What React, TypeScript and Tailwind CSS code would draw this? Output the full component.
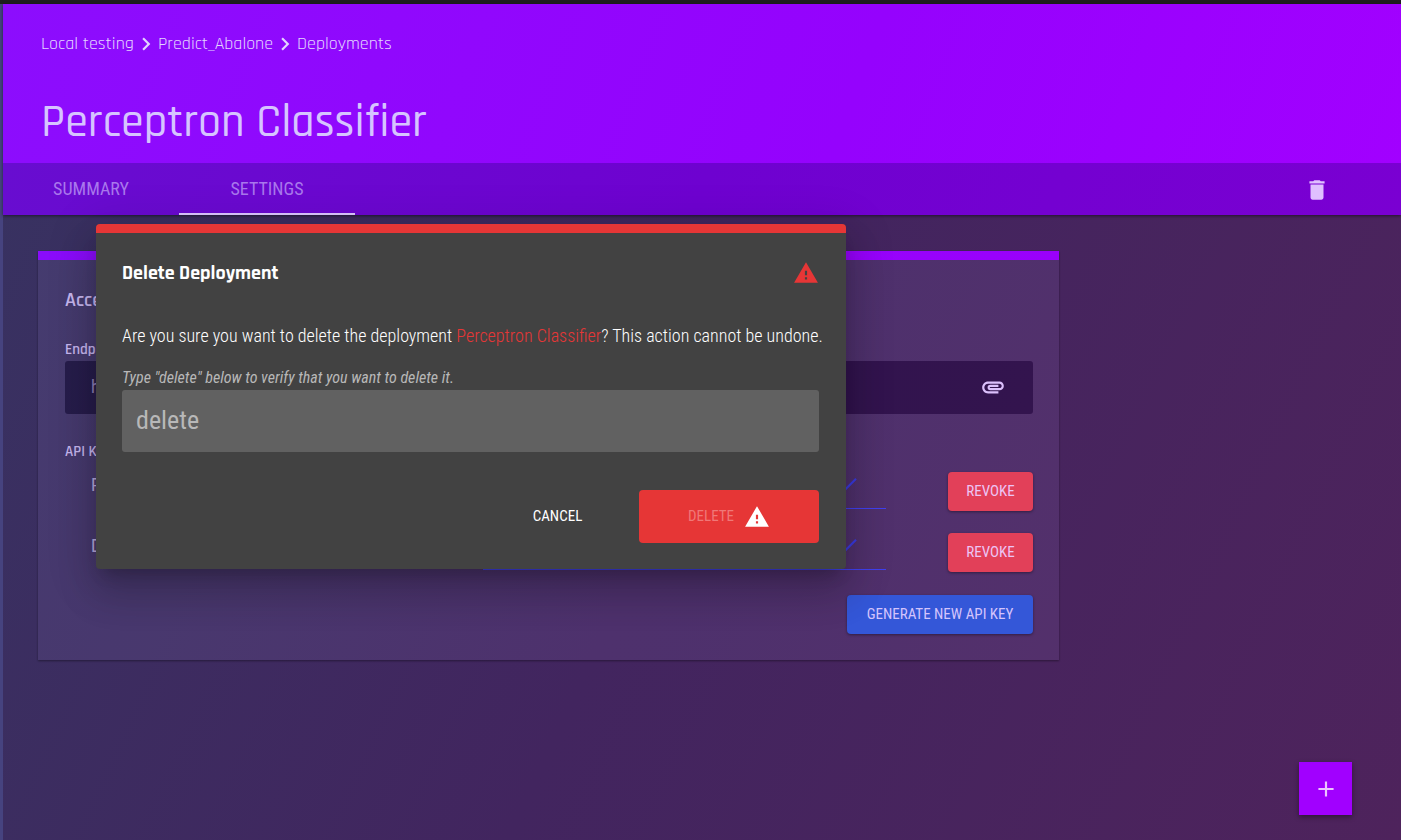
import React from "react";
import { MdChevronRight, MdDelete, MdWarning, MdAttachment, MdAdd, MdDone } from "react-icons/md";

const crumbs = ["Local testing", "Predict_Abalone", "Deployments"];
const apiKeys = ["Primary", "Default"];

function Header() {
  return (
    <header className="bg-linear-[110deg] from-[#8c0dfd] via-[#9502fd] via-60% to-[#a200ff] shadow-[0_1px_3px_rgba(0,0,0,0.5)]">
      <nav
        aria-label="Breadcrumb"
        className="flex h-20 items-center px-[38px] font-['Rajdhani','Roboto',sans-serif] text-lg text-[#e2d4ff]"
      >
        {crumbs.map((crumb, i) => (
          <React.Fragment key={crumb}>
            {i > 0 && <MdChevronRight className="-mx-px size-[26px]" aria-hidden />}
            <a href="#">{crumb}</a>
          </React.Fragment>
        ))}
      </nav>
      <h1 className="h-[79px] px-[38px] pt-[13px] font-['Rajdhani','Roboto',sans-serif] text-[46px] leading-[52px] font-medium text-[#d6c4ff]">
        Perceptron Classifier
      </h1>
      <div className="flex h-[52px] items-stretch justify-between bg-linear-[110deg] from-[#680dd0] via-[#6e02d0] to-[#7a00d2] pr-[71px] font-['Roboto_Condensed',sans-serif] text-lg">
        <div role="tablist" className="flex">
          <button role="tab" aria-selected="false" className="w-44 text-[#a978ec]">SUMMARY</button>
          <button role="tab" aria-selected="true" className="w-44 border-b-2 border-[#dcc6ff] pt-0.5 text-[#a978ec]">
            SETTINGS
          </button>
        </div>
        <button aria-label="Delete deployment" className="pt-0.5 text-[#e0c0ff]">
          <MdDelete className="size-[26px]" />
        </button>
      </div>
    </header>
  );
}

function AccessCard() {
  return (
    <section className="mt-9 ml-[35px] max-w-[1021px] bg-[#c8b4ff]/9 shadow-[0_1px_2px_rgba(0,0,0,0.4)]">
      <div className="h-[9px] bg-linear-to-r from-[#8a0cfb] to-[#9a00fc]" />
      <div className="py-[26px] pr-[26px] pl-[27px] text-[#c8b8f0]">
        <h2 className="font-['Rajdhani','Roboto',sans-serif] text-xl leading-7 font-semibold">Access</h2>
        <label
          htmlFor="endpoint"
          className="mt-6 block font-['Rajdhani','Roboto',sans-serif] text-[15px] leading-[23px] font-semibold"
        >
          Endpoint
        </label>
        <div className="flex h-[53px] items-center rounded-[3px] bg-linear-[110deg] from-[#261d4b] via-[#30134e] to-[#33144e] pr-[27px] pl-[26px]">
          <input
            id="endpoint"
            readOnly
            defaultValue="https://localhost"
            className="min-w-0 flex-1 bg-transparent pb-0.5 font-['Roboto_Condensed',sans-serif] text-lg text-[#8f80b8] outline-none"
          />
          <button aria-label="Copy endpoint" className="pb-0.5 text-[#dcc0fc]">
            <MdAttachment className="size-[26px]" />
          </button>
        </div>
        <h3 className="mt-[26px] font-['Rajdhani','Roboto',sans-serif] text-[15px] leading-[23px] font-semibold">API Keys</h3>
        <ul className="mt-[9px] flex flex-col gap-[22px]">
          {apiKeys.map((name) => (
            <li key={name} className="flex h-[39px] items-start">
              <span className="w-[418px] pl-[26px] font-['Roboto_Condensed',sans-serif] text-lg leading-[26px] text-[#b8a8dc]">
                {name}
              </span>
              <span className="flex h-[37px] w-[403px] items-start justify-end border-b border-[#4040f0] pr-[26px]">
                <MdDone className="size-[26px] text-[#3a3ae0]" aria-hidden />
              </span>
              <button className="ml-auto h-[39px] w-[85px] rounded bg-[#e24059] font-['Roboto_Condensed',sans-serif] text-[15px] text-[#edc4f4] shadow-[0_1px_3px_rgba(0,0,0,0.4)]">
                REVOKE
              </button>
            </li>
          ))}
        </ul>
        <div className="mt-[23px] flex justify-end">
          <button className="h-[39px] min-w-[186px] rounded bg-[#3457d8] px-4 font-['Roboto_Condensed',sans-serif] text-[15px] text-[#d4c4fc] shadow-[0_1px_3px_rgba(0,0,0,0.4)]">
            GENERATE NEW API KEY
          </button>
        </div>
      </div>
    </section>
  );
}

function DeleteDialog() {
  return (
    <div
      role="dialog"
      aria-labelledby="dialog-title"
      className="absolute top-[220px] left-24 w-[750px] overflow-hidden rounded bg-[#424242] pr-[27px] pb-[26px] pl-[26px] font-['Roboto_Condensed',sans-serif] text-white shadow-[0_11px_15px_-7px_rgba(0,0,0,0.2),0_24px_38px_3px_rgba(0,0,0,0.14),0_9px_46px_8px_rgba(0,0,0,0.12)]"
    >
      <div className="-mr-[27px] -ml-[26px] h-[9px] bg-[#e63636]" />
      <div className="mt-[26px] flex h-7 items-center justify-between">
        <h2 id="dialog-title" className="font-['Rajdhani','Roboto',sans-serif] text-xl font-bold">Delete Deployment</h2>
        <MdWarning className="size-[26px] text-[#e63636]" aria-hidden />
      </div>
      <p className="mt-[35px] text-lg leading-7 font-light whitespace-nowrap">
        Are you sure you want to delete the deployment <span className="text-[#e63636]">Perceptron Classifier</span>? This action
        cannot be undone.
      </p>
      <label htmlFor="confirm" className="mt-4 block text-base leading-6 text-[#b8b8b8] italic">
        Type "delete" below to verify that you want to delete it.
      </label>
      <input
        id="confirm"
        type="text"
        placeholder="delete"
        className="block h-[62px] w-full rounded-[3px] bg-[#616161] px-[14px] pb-0.5 text-[26px] outline-none placeholder:text-[#b8b8b8]"
      />
      <div className="mt-[38px] flex h-[53px] justify-end">
        <button className="w-[163px] text-[15px]">CANCEL</button>
        <button className="flex w-[180px] items-center justify-center gap-[10px] rounded bg-[#e63636] text-[15px]">
          <span className="text-[#f07878]">DELETE</span>
          <MdWarning className="size-[26px]" aria-hidden />
        </button>
      </div>
    </div>
  );
}

export default function App() {
  return (
    <div className="relative flex min-h-screen flex-col border-t-4 border-[#1e1e1e] bg-[#46437f] pl-[3px]">
      <div className="flex flex-1 flex-col bg-linear-[115deg] from-[#373361] via-[#42255f] via-50% to-[#4e235c]">
        <Header />
        <main className="flex flex-1 flex-col justify-between">
          <AccessCard />
          <button
            aria-label="Add"
            className="mr-[49px] mb-[25px] flex size-[53px] items-center justify-center self-end bg-[#a100ff] text-[#ecc4ff] shadow-[0_2px_5px_rgba(0,0,0,0.4)]"
          >
            <MdAdd className="size-[26px]" />
          </button>
        </main>
      </div>
      <DeleteDialog />
    </div>
  );
}
